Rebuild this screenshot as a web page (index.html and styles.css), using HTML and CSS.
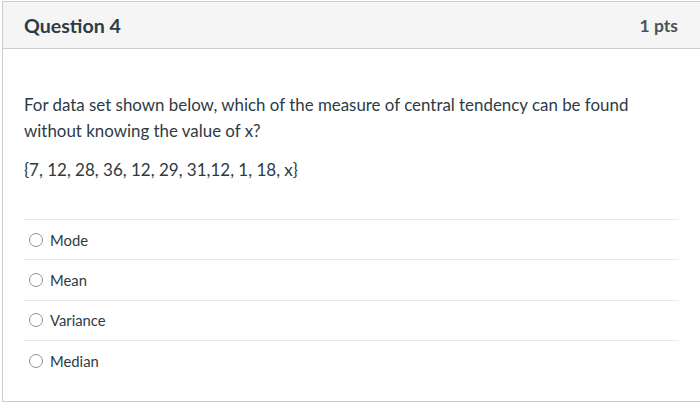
FILE: index.html
```html
<!DOCTYPE html>
<html>
<head>
<meta charset="utf-8">
<link rel="stylesheet" href="styles.css">
</head>
<body>
<div class="question">
  <div class="header">
    <div class="title">Question 4</div>
    <div class="pts">1 pts</div>
  </div>
  <div class="content">
    <p class="text">For data set shown below, which of the measure of central tendency can be found without knowing the value of x?</p>
    <p class="set">{7, 12, 28, 36, 12, 29, 31,12, 1, 18, x}</p>
    <div class="answers">
      <label class="answer"><span class="radio"></span>Mode</label>
      <label class="answer"><span class="radio"></span>Mean</label>
      <label class="answer"><span class="radio"></span>Variance</label>
      <label class="answer"><span class="radio"></span>Median</label>
    </div>
  </div>
</div>
</body>
</html>
```
FILE: styles.css
```css
html, body {
  margin: 0;
  padding: 0;
  background: #fff;
  overflow: hidden;
}
body {
  font-family: Lato, "Open Sans", sans-serif;
  color: #2d3b45;
}
.question {
  margin: 1px 0 0 2px;
  width: 710px;
  height: 401px;
  box-sizing: border-box;
  border: 1px solid #c7cdd1;
  border-right: none;
  display: flex;
  flex-direction: column;
}
.header {
  height: 46px;
  background: #f5f5f5;
  border-bottom: 1px solid #c7cdd1;
  display: flex;
  align-items: center;
  justify-content: space-between;
  padding: 0 34px 0 21px;
  flex-shrink: 0;
}
.title {
  font-size: 19.6px;
  font-weight: 700;
  color: #2d3b45;
}
.pts {
  font-size: 17.5px;
  font-weight: 700;
  color: #4a5257;
}
.content {
  padding: 43px 0 0 21px;
  width: 655px;
}
.text {
  margin: 0;
  font-size: 16.9px;
  line-height: 26px;
}
.set {
  margin: 13px 0 0 0;
  font-size: 17px;
  line-height: 26px;
}
.answers {
  margin-top: 36px;
}
.answer {
  display: flex;
  align-items: center;
  height: 39.4px;
  border-top: 1px solid #e6e8ea;
  font-size: 14.8px;
  padding-left: 5px;
}
.radio {
  width: 14px;
  height: 14px;
  border: 1.5px solid #8b9094;
  border-radius: 50%;
  margin-right: 7px;
  box-sizing: border-box;
}
```
